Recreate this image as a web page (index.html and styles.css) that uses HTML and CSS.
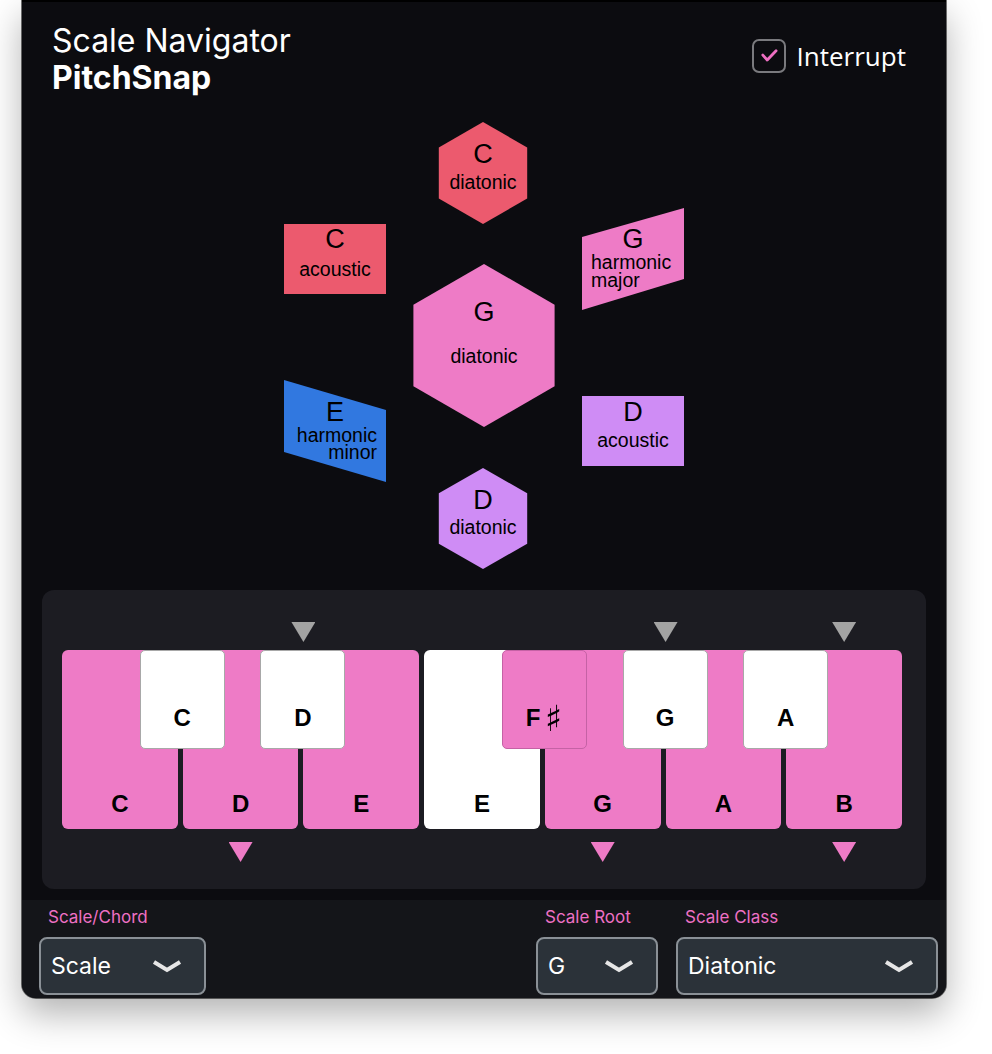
FILE: index.html
```html
<!DOCTYPE html>
<html lang="en">
<head>
<meta charset="utf-8">
<title>Scale Navigator</title>
<link rel="stylesheet" href="styles.css">
</head>
<body>
<div class="window">
  <header class="header">
    <div class="titles">
      <div class="title">Scale Navigator</div>
      <div class="subtitle">PitchSnap</div>
    </div>
    <label class="interrupt">
      <span class="checkbox">
        <svg viewBox="0 0 34 34" width="30" height="30" class="check"><polyline points="10,16 15,21.5 25,11"/></svg>
      </span>
      <span class="interrupt-text">Interrupt</span>
    </label>
  </header>

  <svg class="navigator" width="924" height="490" viewBox="0 0 924 490">
    <g class="node">
      <polygon class="red" points="461,22 505.2,47.5 505.2,98.5 461,124 416.8,98.5 416.8,47.5"/>
      <text class="node-key" x="461" y="63">C</text>
      <text class="node-label" x="461" y="89">diatonic</text>
    </g>
    <g class="node">
      <rect class="red" x="262" y="124" width="102" height="70"/>
      <text class="node-key" x="313" y="148">C</text>
      <text class="node-label" x="313" y="176">acoustic</text>
    </g>
    <g class="node">
      <polygon class="pink" points="560,137 662,108 662,179 560,210"/>
      <text class="node-key" x="611" y="148">G</text>
      <text class="node-label start" x="569" y="169">harmonic</text>
      <text class="node-label start" x="569" y="187">major</text>
    </g>
    <g class="node">
      <polygon class="pink" points="462,164 532.6,204.75 532.6,286.25 462,327 391.4,286.25 391.4,204.75"/>
      <text class="node-key" x="462" y="221">G</text>
      <text class="node-label" x="462" y="263">diatonic</text>
    </g>
    <g class="node">
      <polygon class="blue" points="262,280 364,310 364,382 262,352"/>
      <text class="node-key" x="313" y="321">E</text>
      <text class="node-label end" x="355" y="342">harmonic</text>
      <text class="node-label end" x="355" y="359">minor</text>
    </g>
    <g class="node">
      <rect class="purple" x="560" y="296" width="102" height="70"/>
      <text class="node-key" x="611" y="321">D</text>
      <text class="node-label" x="611" y="347">acoustic</text>
    </g>
    <g class="node">
      <polygon class="purple" points="461,368 505.2,393.25 505.2,443.75 461,469 416.8,443.75 416.8,393.25"/>
      <text class="node-key" x="461" y="409">D</text>
      <text class="node-label" x="461" y="434">diatonic</text>
    </g>
  </svg>

  <section class="keyboard-panel">
    <div class="marks">
      <span class="tri tri-gray on-edge col-3"></span>
      <span class="tri tri-gray col-6 on-edge"></span>
      <span class="tri tri-gray col-7"></span>
    </div>
    <div class="keyboard">
      <div class="white-key on col-1">C</div>
      <div class="white-key on col-2">D</div>
      <div class="white-key on col-3">E</div>
      <div class="white-key col-4">E</div>
      <div class="white-key on col-5">G</div>
      <div class="white-key on col-6">A</div>
      <div class="white-key on col-7">B</div>
      <div class="black-key span-1">C</div>
      <div class="black-key span-2">D</div>
      <div class="black-key on span-4">F<span class="sharp">&#x266F;</span></div>
      <div class="black-key span-5">G</div>
      <div class="black-key span-6">A</div>
    </div>
    <div class="marks marks-bottom">
      <span class="tri tri-pink col-2"></span>
      <span class="tri tri-pink col-5"></span>
      <span class="tri tri-pink col-7"></span>
    </div>
  </section>

  <footer class="controls">
    <div class="field">
      <div class="field-label">Scale/Chord</div>
      <div class="select select-type"><span>Scale</span><svg class="chevron" viewBox="0 0 30 14" width="30" height="14"><polyline points="2,3 15,11 28,3"/></svg></div>
    </div>
    <div class="field field-root">
      <div class="field-label">Scale Root</div>
      <div class="select select-root"><span>G</span><svg class="chevron" viewBox="0 0 30 14" width="30" height="14"><polyline points="2,3 15,11 28,3"/></svg></div>
    </div>
    <div class="field">
      <div class="field-label">Scale Class</div>
      <div class="select select-class"><span>Diatonic</span><svg class="chevron" viewBox="0 0 30 14" width="30" height="14"><polyline points="2,3 15,11 28,3"/></svg></div>
    </div>
  </footer>
</div>
</body>
</html>
```

FILE: styles.css
```css
* { box-sizing: border-box; }

html, body {
  margin: 0;
  padding: 0;
  background: #ffffff;
}

body {
  min-height: 1054px;
  font-family: Inter, "Noto Sans", sans-serif;
  color: #ffffff;
}

.window {
  width: 924px;
  height: 998px;
  margin-left: 22px;
  background: #0c0c10;
  border-top: 2px solid #000000;
  border-radius: 0 0 14px 14px;
  overflow: hidden;
  box-shadow: 0 0 0 1px rgba(0, 0, 0, 0.55), 0 16px 36px rgba(0, 0, 0, 0.3);
  display: flex;
  flex-direction: column;
}

/* Header */
.header {
  height: 98px;
  padding: 20px 40px 0 30px;
  display: flex;
  justify-content: space-between;
  align-items: flex-start;
}

.title,
.subtitle {
  font-size: 32px;
  line-height: 37px;
}

.title { font-weight: 400; }
.subtitle { font-weight: 700; }

.interrupt {
  margin-top: 17px;
  display: flex;
  align-items: center;
  gap: 11px;
}

.checkbox {
  width: 34px;
  height: 34px;
  border: 2px solid #7a7a7e;
  border-radius: 7px;
  display: flex;
  align-items: center;
  justify-content: center;
}

.check polyline {
  fill: none;
  stroke: #ee6fc2;
  stroke-width: 3.2;
  stroke-linecap: round;
  stroke-linejoin: round;
}

.interrupt-text {
  font-family: "Open Sans", "DejaVu Sans", sans-serif;
  font-size: 26px;
  line-height: 34px;
  color: #ffffff;
}

/* Navigator diagram */
.navigator {
  display: block;
  flex: none;
}

.node-key,
.node-label {
  font-family: "Liberation Sans", Arial, sans-serif;
  fill: #000000;
  text-anchor: middle;
}

.node-key { font-size: 27px; }
.node-label { font-size: 19.5px; }
.node-label.start { text-anchor: start; }
.node-label.end { text-anchor: end; }

.red { fill: #ec5a6e; }
.pink { fill: #ee7bc6; }
.blue { fill: #3178e0; }
.purple { fill: #cf8cf5; }

/* Keyboard */
.keyboard-panel {
  margin: 0 20px;
  height: 299px;
  flex: none;
  background: #1c1c22;
  border-radius: 12px;
  padding: 32px 24px 0 20px;
}

.marks {
  display: grid;
  grid-template-columns: repeat(7, 1fr);
  column-gap: 5px;
  height: 20px;
}

.marks-bottom {
  margin-top: 13px;
}

.keyboard {
  margin-top: 8px;
  display: grid;
  grid-template-columns: repeat(7, 1fr);
  grid-template-rows: 99px 80px;
  column-gap: 5px;
}

.tri {
  width: 24px;
  height: 20px;
  clip-path: polygon(0 0, 100% 0, 50% 100%);
  justify-self: center;
  grid-row: 1;
}

.tri-gray { background: #a3a3a3; }
.tri-pink { background: #ee7bc6; }

.tri.on-edge {
  justify-self: start;
  margin-left: -12px;
}

.col-1 { grid-column: 1; }
.col-2 { grid-column: 2; }
.col-3 { grid-column: 3; }
.col-4 { grid-column: 4; }
.col-5 { grid-column: 5; }
.col-6 { grid-column: 6; }
.col-7 { grid-column: 7; }

.white-key {
  grid-row: 1 / 3;
  background: #ffffff;
  border-radius: 6px;
  display: flex;
  align-items: flex-end;
  justify-content: center;
  padding-bottom: 11px;
  font-family: "Liberation Sans", Arial, sans-serif;
  font-weight: 700;
  font-size: 24px;
  line-height: 28px;
  color: #000000;
}

.white-key.on { background: #ee7bc6; }

.black-key {
  grid-row: 1;
  width: 85px;
  height: 99px;
  justify-self: center;
  margin-left: 4px;
  position: relative;
  z-index: 1;
  background: #ffffff;
  border: 1px solid #a8a8a8;
  border-radius: 5px;
  display: flex;
  align-items: flex-end;
  justify-content: center;
  padding-bottom: 16px;
  font-family: "Liberation Sans", Arial, sans-serif;
  font-weight: 700;
  font-size: 24px;
  line-height: 28px;
  color: #000000;
}

.black-key.on {
  background: #ee7bc6;
  border-color: #c562a5;
}

.sharp {
  display: inline-block;
  font-family: "DejaVu Sans", sans-serif;
  font-weight: 400;
  font-size: 36px;
  line-height: 28px;
  color: #000000;
  margin-left: 5px;
  transform: translateY(1px);
  will-change: transform;
}

.span-1 { grid-column: 1 / span 2; }
.span-2 { grid-column: 2 / span 2; }
.span-4 { grid-column: 4 / span 2; }
.span-5 { grid-column: 5 / span 2; }
.span-6 { grid-column: 6 / span 2; }

/* Footer controls */
.controls {
  margin-top: 11px;
  height: 98px;
  flex: none;
  background: #141519;
  padding: 7px 8px 3px 17px;
  display: flex;
  align-items: flex-start;
  gap: 18px;
}

.field-root { margin-left: auto; }

.field-label {
  font-size: 17px;
  line-height: 20px;
  color: #ee70c4;
  padding-left: 9px;
  margin-bottom: 10px;
}

.select {
  height: 58px;
  border: 2px solid #8a9096;
  border-radius: 8px;
  background: #2b3239;
  display: flex;
  align-items: center;
  justify-content: space-between;
  padding: 0 22px 0 10px;
  font-size: 23px;
  color: #ffffff;
}

.select-type { width: 167px; }
.select-root { width: 122px; }
.select-class { width: 262px; }

.chevron polyline {
  fill: none;
  stroke: #e6e6e6;
  stroke-width: 4;
  stroke-linecap: butt;
  stroke-linejoin: miter;
}
```
